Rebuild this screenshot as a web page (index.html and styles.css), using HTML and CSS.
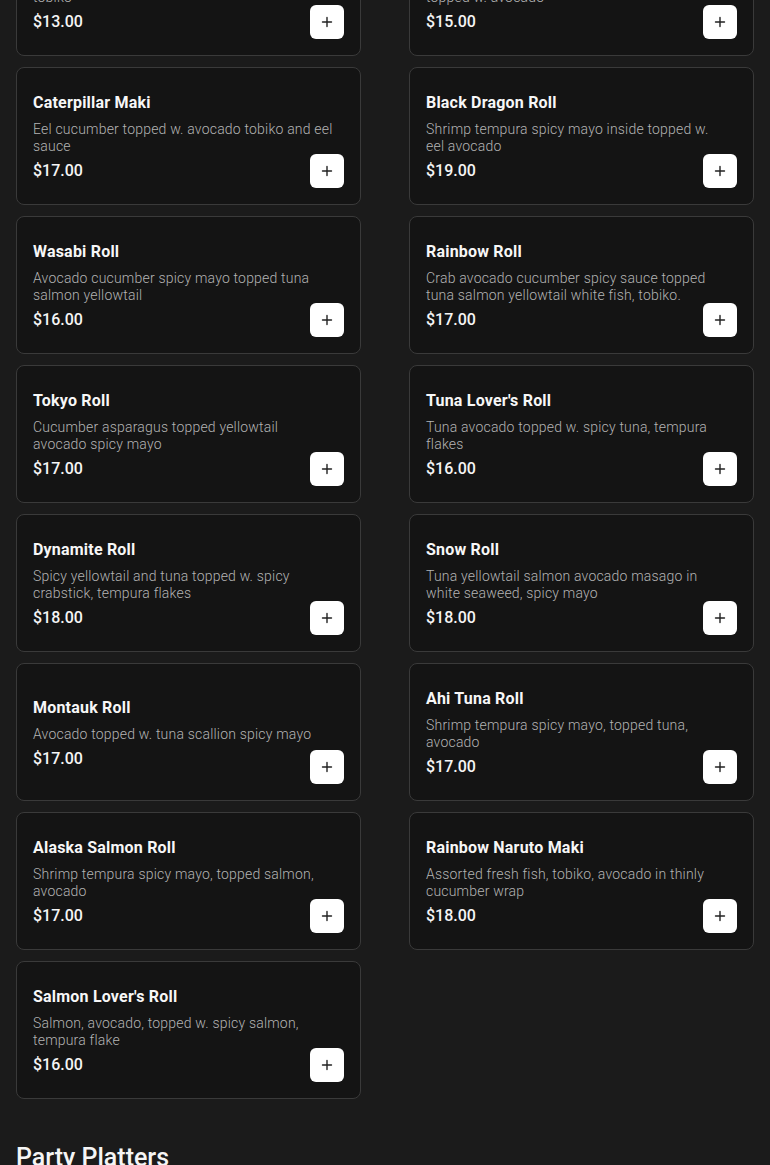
FILE: index.html
```html
<!DOCTYPE html>
<html lang="en">
<head>
<meta charset="utf-8">
<title>Menu</title>
<link rel="stylesheet" href="styles.css">
</head>
<body>
<main class="menu">
  <section class="items">
    <article class="card">
      <div class="info">
        <h3 class="name">Spicy Crunchy Roll</h3>
        <p class="desc">Spicy tuna cucumber tempura flakes topped w. tobiko</p>
        <p class="price">$13.00</p>
      </div>
      <button class="add" aria-label="Add"><svg viewBox="0 0 12 12" width="12" height="12"><path d="M6 1.5v9M1.5 6h9" stroke="#222" stroke-width="1.4" stroke-linecap="round"/></svg></button>
    </article>
    <article class="card">
      <div class="info">
        <h3 class="name">Crazy Roll</h3>
        <p class="desc">Shrimp tempura spicy mayo cucumber inside topped w. avocado</p>
        <p class="price">$15.00</p>
      </div>
      <button class="add" aria-label="Add"><svg viewBox="0 0 12 12" width="12" height="12"><path d="M6 1.5v9M1.5 6h9" stroke="#222" stroke-width="1.4" stroke-linecap="round"/></svg></button>
    </article>

    <article class="card">
      <div class="info">
        <h3 class="name">Caterpillar Maki</h3>
        <p class="desc">Eel cucumber topped w. avocado tobiko and eel sauce</p>
        <p class="price">$17.00</p>
      </div>
      <button class="add" aria-label="Add"><svg viewBox="0 0 12 12" width="12" height="12"><path d="M6 1.5v9M1.5 6h9" stroke="#222" stroke-width="1.4" stroke-linecap="round"/></svg></button>
    </article>
    <article class="card">
      <div class="info">
        <h3 class="name">Black Dragon Roll</h3>
        <p class="desc">Shrimp tempura spicy mayo inside topped w. eel avocado</p>
        <p class="price">$19.00</p>
      </div>
      <button class="add" aria-label="Add"><svg viewBox="0 0 12 12" width="12" height="12"><path d="M6 1.5v9M1.5 6h9" stroke="#222" stroke-width="1.4" stroke-linecap="round"/></svg></button>
    </article>

    <article class="card">
      <div class="info">
        <h3 class="name">Wasabi Roll</h3>
        <p class="desc">Avocado cucumber spicy mayo topped tuna salmon yellowtail</p>
        <p class="price">$16.00</p>
      </div>
      <button class="add" aria-label="Add"><svg viewBox="0 0 12 12" width="12" height="12"><path d="M6 1.5v9M1.5 6h9" stroke="#222" stroke-width="1.4" stroke-linecap="round"/></svg></button>
    </article>
    <article class="card">
      <div class="info">
        <h3 class="name">Rainbow Roll</h3>
        <p class="desc">Crab avocado cucumber spicy sauce topped tuna salmon yellowtail white fish, tobiko.</p>
        <p class="price">$17.00</p>
      </div>
      <button class="add" aria-label="Add"><svg viewBox="0 0 12 12" width="12" height="12"><path d="M6 1.5v9M1.5 6h9" stroke="#222" stroke-width="1.4" stroke-linecap="round"/></svg></button>
    </article>

    <article class="card">
      <div class="info">
        <h3 class="name">Tokyo Roll</h3>
        <p class="desc">Cucumber asparagus topped yellowtail avocado spicy mayo</p>
        <p class="price">$17.00</p>
      </div>
      <button class="add" aria-label="Add"><svg viewBox="0 0 12 12" width="12" height="12"><path d="M6 1.5v9M1.5 6h9" stroke="#222" stroke-width="1.4" stroke-linecap="round"/></svg></button>
    </article>
    <article class="card">
      <div class="info">
        <h3 class="name">Tuna Lover's Roll</h3>
        <p class="desc">Tuna avocado topped w. spicy tuna, tempura flakes</p>
        <p class="price">$16.00</p>
      </div>
      <button class="add" aria-label="Add"><svg viewBox="0 0 12 12" width="12" height="12"><path d="M6 1.5v9M1.5 6h9" stroke="#222" stroke-width="1.4" stroke-linecap="round"/></svg></button>
    </article>

    <article class="card">
      <div class="info">
        <h3 class="name">Dynamite Roll</h3>
        <p class="desc">Spicy yellowtail and tuna topped w. spicy crabstick, tempura flakes</p>
        <p class="price">$18.00</p>
      </div>
      <button class="add" aria-label="Add"><svg viewBox="0 0 12 12" width="12" height="12"><path d="M6 1.5v9M1.5 6h9" stroke="#222" stroke-width="1.4" stroke-linecap="round"/></svg></button>
    </article>
    <article class="card">
      <div class="info">
        <h3 class="name">Snow Roll</h3>
        <p class="desc">Tuna yellowtail salmon avocado masago in white seaweed, spicy mayo</p>
        <p class="price">$18.00</p>
      </div>
      <button class="add" aria-label="Add"><svg viewBox="0 0 12 12" width="12" height="12"><path d="M6 1.5v9M1.5 6h9" stroke="#222" stroke-width="1.4" stroke-linecap="round"/></svg></button>
    </article>

    <article class="card">
      <div class="info">
        <h3 class="name">Montauk Roll</h3>
        <p class="desc">Avocado topped w. tuna scallion spicy mayo</p>
        <p class="price">$17.00</p>
      </div>
      <button class="add" aria-label="Add"><svg viewBox="0 0 12 12" width="12" height="12"><path d="M6 1.5v9M1.5 6h9" stroke="#222" stroke-width="1.4" stroke-linecap="round"/></svg></button>
    </article>
    <article class="card">
      <div class="info">
        <h3 class="name">Ahi Tuna Roll</h3>
        <p class="desc">Shrimp tempura spicy mayo, topped tuna, avocado</p>
        <p class="price">$17.00</p>
      </div>
      <button class="add" aria-label="Add"><svg viewBox="0 0 12 12" width="12" height="12"><path d="M6 1.5v9M1.5 6h9" stroke="#222" stroke-width="1.4" stroke-linecap="round"/></svg></button>
    </article>

    <article class="card">
      <div class="info">
        <h3 class="name">Alaska Salmon Roll</h3>
        <p class="desc">Shrimp tempura spicy mayo, topped salmon, avocado</p>
        <p class="price">$17.00</p>
      </div>
      <button class="add" aria-label="Add"><svg viewBox="0 0 12 12" width="12" height="12"><path d="M6 1.5v9M1.5 6h9" stroke="#222" stroke-width="1.4" stroke-linecap="round"/></svg></button>
    </article>
    <article class="card">
      <div class="info">
        <h3 class="name">Rainbow Naruto Maki</h3>
        <p class="desc">Assorted fresh fish, tobiko, avocado in thinly cucumber wrap</p>
        <p class="price">$18.00</p>
      </div>
      <button class="add" aria-label="Add"><svg viewBox="0 0 12 12" width="12" height="12"><path d="M6 1.5v9M1.5 6h9" stroke="#222" stroke-width="1.4" stroke-linecap="round"/></svg></button>
    </article>

    <article class="card">
      <div class="info">
        <h3 class="name">Salmon Lover's Roll</h3>
        <p class="desc">Salmon, avocado, topped w. spicy salmon, tempura flake</p>
        <p class="price">$16.00</p>
      </div>
      <button class="add" aria-label="Add"><svg viewBox="0 0 12 12" width="12" height="12"><path d="M6 1.5v9M1.5 6h9" stroke="#222" stroke-width="1.4" stroke-linecap="round"/></svg></button>
    </article>
  </section>

  <h2 class="section-title">Party Platters</h2>
</main>
</body>
</html>
```

FILE: styles.css
```css
* { box-sizing: border-box; }

html, body {
  margin: 0;
  padding: 0;
  background: #1b1b1b;
  color: #f5f5f5;
  font-family: Roboto, "Noto Sans", "Liberation Sans", sans-serif;
}

.menu {
  padding: 0 16px;
}

.items {
  display: grid;
  grid-template-columns: 345px 345px;
  column-gap: 48px;
  row-gap: 11px;
  margin-top: -82px;
}

.card {
  display: grid;
  grid-template-columns: 1fr;
  grid-template-rows: 1fr;
  min-height: 138px;
  padding: 16px;
  background: #141414;
  border: 1px solid #3a3a3a;
  border-radius: 8px;
}

.info {
  grid-area: 1 / 1;
  align-self: center;
  padding: 2px 10px 0 0;
}

.name {
  margin: 0;
  font-size: 16px;
  line-height: 24px;
  font-weight: 700;
  letter-spacing: 0.2px;
  color: #f7f7f7;
}

.desc {
  margin: 6px 0 4px;
  font-size: 14px;
  line-height: 17px;
  font-weight: 300;
  letter-spacing: 0.2px;
  color: #b3b3b3;
}

.price {
  margin: 0;
  font-size: 16px;
  line-height: 24px;
  font-weight: 500;
  color: #f5f5f5;
}

.add {
  grid-area: 1 / 1;
  align-self: end;
  justify-self: end;
  width: 34px;
  height: 34px;
  padding: 0;
  border: none;
  border-radius: 6px;
  background: #ffffff;
  display: flex;
  align-items: center;
  justify-content: center;
  cursor: pointer;
}

.add svg { display: block; }

.section-title {
  margin: 43px 0 0;
  font-size: 25px;
  line-height: 32px;
  font-weight: 500;
  color: #f5f5f5;
}
```
